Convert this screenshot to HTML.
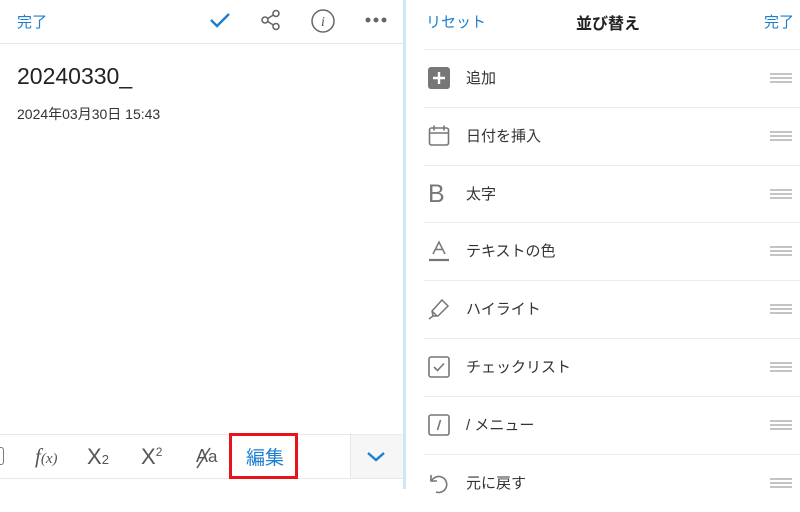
<!DOCTYPE html>
<html><head><meta charset="utf-8"><style>
*{margin:0;padding:0;box-sizing:border-box}
body{width:800px;height:489px;overflow:hidden;background:#fff;font-family:"Liberation Sans","Noto Sans CJK JP",sans-serif;position:relative}
.a{position:absolute}
.blue{color:#1a7fd0}
.row{position:absolute;left:424px;width:376px;height:58px;border-top:1px solid #ececec}
.row .t{position:absolute;left:42px;top:17px;font-size:15px;color:#333}
.row .ic{position:absolute;left:4px;top:17px;width:22px;height:22px}
.h{position:absolute;left:346px;top:23px;width:22px;height:10px;border-top:2px solid #c4c4c4;border-bottom:2px solid #c4c4c4}
.h:after{content:"";position:absolute;left:0;right:0;top:2px;border-top:2px solid #c4c4c4}
</style></head><body>
<!-- left -->
<div class="a blue" style="left:17px;top:11px;font-size:15px">完了</div>
<svg class="a" style="left:208px;top:10px" width="24" height="20"><path d="M3 10 L9 16 L21 4" stroke="#1a7fd0" stroke-width="2.4" fill="none"/></svg>
<svg class="a" style="left:259px;top:9px" width="24" height="22" fill="none" stroke="#666" stroke-width="1.6"><circle cx="6" cy="11" r="3"/><circle cx="17" cy="4.5" r="3"/><circle cx="17" cy="17.5" r="3"/><path d="M8.6 9.5 L14.4 6 M8.6 12.5 L14.4 16"/></svg>
<svg class="a" style="left:310px;top:8px" width="26" height="26"><circle cx="13" cy="13" r="11" stroke="#666" stroke-width="1.5" fill="none"/><text x="13" y="18" font-family="Liberation Serif" font-style="italic" font-size="14" fill="#555" text-anchor="middle">i</text></svg>
<svg class="a" style="left:364px;top:16px" width="24" height="8" fill="#666"><circle cx="4" cy="4" r="2.5"/><circle cx="12" cy="4" r="2.5"/><circle cx="20" cy="4" r="2.5"/></svg>
<div class="a" style="left:0;top:43px;width:403px;border-top:1px solid #e6e6e6"></div>
<div class="a" style="left:17px;top:63px;font-size:23px;color:#222">20240330_</div>
<div class="a" style="left:17px;top:104px;font-size:14px;color:#333">2024年03月30日 15:43</div>
<!-- toolbar -->
<div class="a" style="left:0;top:434px;width:403px;height:45px;border-top:1px solid #e8e8e8;border-bottom:1px solid #e8e8e8"></div>
<div class="a" style="left:350px;top:435px;width:53px;height:43px;background:#f6f6f6;border-left:1px solid #e8e8e8"></div>
<div class="a" style="left:-6px;top:447px;width:10px;height:18px;border:1.5px solid #777;border-radius:3px"></div>
<div class="a" style="left:35px;top:444px;font-family:'Liberation Serif';font-style:italic;font-size:21px;color:#555">f<span style="font-size:15px">(x)</span></div>
<div class="a" style="left:87px;top:444px;font-size:22px;color:#555">X<span style="font-size:13px">2</span></div>
<div class="a" style="left:141px;top:444px;font-size:22px;color:#555">X<span style="font-size:12px;vertical-align:8px">2</span></div>
<div class="a" style="left:196px;top:446px;font-size:18px;color:#555">A<span style="font-size:17px">a</span></div>
<svg class="a" style="left:194px;top:446px" width="20" height="24"><path d="M16 2 L3 22" stroke="#555" stroke-width="1.5"/></svg>
<div class="a" style="left:229px;top:433px;width:69px;height:46px;border:3px solid #e8141c"></div>
<div class="a blue" style="left:246px;top:443px;font-size:19px">編集</div>
<svg class="a" style="left:365px;top:450px" width="22" height="14"><path d="M3 3 L11 10 L19 3" stroke="#1a7fd0" stroke-width="2.4" fill="none"/></svg>
<div class="a" style="left:403px;top:0;width:3px;height:489px;background:#cfe6f5"></div>
<!-- right -->
<div class="a blue" style="left:426px;top:11px;font-size:15px">リセット</div>
<div class="a" style="left:576px;top:10px;font-size:16px;font-weight:bold;color:#222">並び替え</div>
<div class="a blue" style="left:764px;top:11px;font-size:15px">完了</div>
<div class="row" style="top:49px"><svg class="ic" viewBox="0 0 22 22"><rect x="0" y="0" width="22" height="22" rx="3" fill="#777"/><path d="M11 5v12M5 11h12" stroke="#fff" stroke-width="2.4"/></svg><div class="t">追加</div><div class="h"></div></div>
<div class="row" style="top:107px"><svg class="ic" viewBox="0 0 22 22" fill="none" stroke="#777" stroke-width="1.6"><rect x="1.5" y="3" width="19" height="17" rx="2"/><path d="M1.5 8h19M6 0.5v5M16 0.5v5"/></svg><div class="t">日付を挿入</div><div class="h"></div></div>
<div class="row" style="top:165px"><div class="ic" style="font-size:25px;color:#777;left:4px;top:14px">B</div><div class="t">太字</div><div class="h"></div></div>
<div class="row" style="top:222px"><svg class="ic" viewBox="0 0 22 22" fill="none" stroke="#777" stroke-width="1.5"><path d="M5 14 L11 2 L17 14 M7.5 9.5h7"/><path d="M1 20h20" stroke-width="2.2"/></svg><div class="t">テキストの色</div><div class="h"></div></div>
<div class="row" style="top:280px"><svg class="ic" viewBox="0 0 22 22" fill="none" stroke="#777" stroke-width="1.5"><path d="M14 2 L20 8 L10 18 L5 18 L4 13 Z M4 13 L9 18 M1 21 L5 18"/></svg><div class="t">ハイライト</div><div class="h"></div></div>
<div class="row" style="top:338px"><svg class="ic" viewBox="0 0 22 22" fill="none" stroke="#777" stroke-width="1.6"><rect x="1" y="1" width="20" height="20" rx="2"/><path d="M6 11 L9.5 14.5 L16 7.5"/></svg><div class="t">チェックリスト</div><div class="h"></div></div>
<div class="row" style="top:396px"><svg class="ic" viewBox="0 0 22 22" fill="none" stroke="#777" stroke-width="1.6"><rect x="1" y="1" width="20" height="20" rx="2"/><path d="M12.5 6 L9.5 16"/></svg><div class="t">/ メニュー</div><div class="h"></div></div>
<div class="row" style="top:454px"><svg class="ic" viewBox="0 0 22 22" fill="none" stroke="#777" stroke-width="1.6"><path d="M3 3v6h6M3.5 9 A8 8 0 1 1 8 20"/></svg><div class="t">元に戻す</div><div class="h"></div></div>
</body></html>
